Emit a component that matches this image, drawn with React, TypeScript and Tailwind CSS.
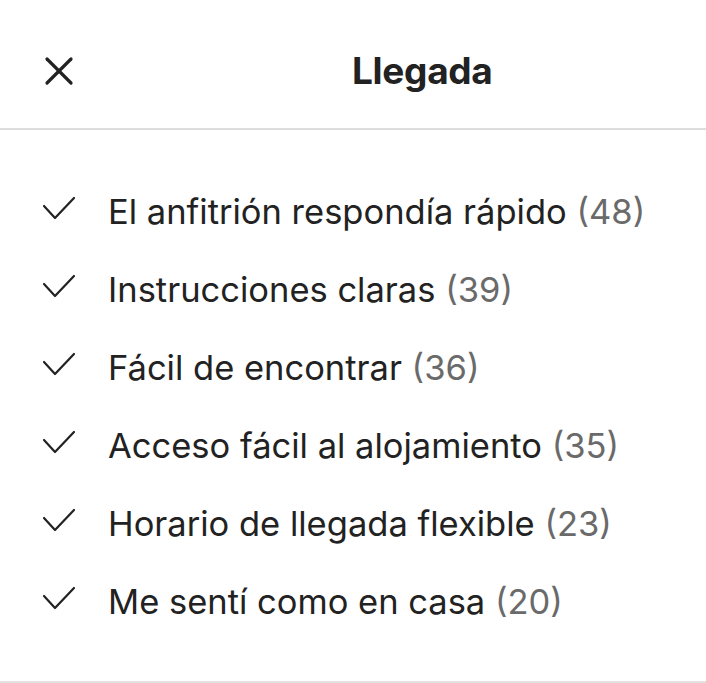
import { X } from "lucide-react";

interface Highlight {
  label: string;
  count: number;
}

const highlights: Highlight[] = [
  { label: "El anfitrión respondía rápido", count: 48 },
  { label: "Instrucciones claras", count: 39 },
  { label: "Fácil de encontrar", count: 36 },
  { label: "Acceso fácil al alojamiento", count: 35 },
  { label: "Horario de llegada flexible", count: 23 },
  { label: "Me sentí como en casa", count: 20 },
];

// thin tick used in front of every highlight
const Tick = () => (
  <svg
    width="34"
    height="24"
    viewBox="0 0 34 24"
    fill="none"
    stroke="#222222"
    strokeWidth="2.2"
    strokeLinecap="round"
    strokeLinejoin="round"
    className="shrink-0 mb-[8px]"
  >
    <path d="M2 10 13 22 32 2" />
  </svg>
);

export default function App() {
  return (
    <div
      className="w-[706px] h-[683px] bg-white text-[#222222] flex flex-col"
      style={{ fontFamily: "Inter, 'Noto Sans', sans-serif" }}
    >
      {/* header */}
      <div className="h-[130px] flex items-center pt-[14px] pl-[35px] border-b-2 border-[#dddddd]">
        <X className="w-[48px] h-[48px] text-[#222222]" strokeWidth={1.6} />
        <h1 className="ml-[269px] text-[37px] font-bold tracking-[-0.3px]">
          Llegada
        </h1>
      </div>

      {/* list */}
      <ul className="flex-1 pt-[43px] border-b-2 border-[#e2e2e2]">
        {highlights.map((h) => (
          <li key={h.label} className="h-[78px] flex items-center pl-[42px]">
            <Tick />
            <span className="ml-[32px] text-[34.5px] leading-none">
              {h.label} <span className="text-[#6a6a6a]">({h.count})</span>
            </span>
          </li>
        ))}
      </ul>
    </div>
  );
}
